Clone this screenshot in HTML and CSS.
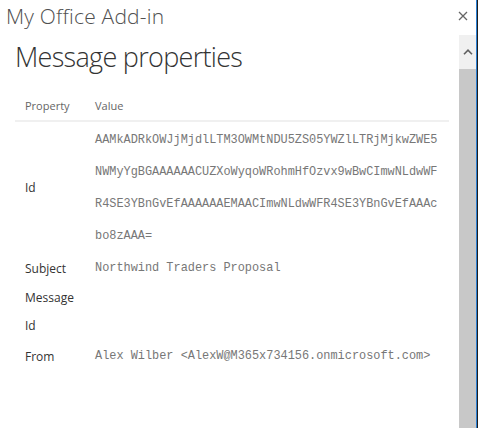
FILE: index.html
```html
<!DOCTYPE html>
<html>
<head>
<meta charset="utf-8">
<link rel="stylesheet" href="styles.css">
</head>
<body>
<div class="window">
  <div class="titlebar">
    <span class="app-title">My Office Add-in</span>
    <svg class="close" width="10" height="10" viewBox="0 0 10 10"><path d="M1 1L9 9M9 1L1 9" stroke="#666" stroke-width="1.3" fill="none"/></svg>
  </div>
  <div class="pane">
    <div class="content">
      <h1 class="heading">Message properties</h1>
      <table class="props">
        <thead>
          <tr><th class="col-prop">Property</th><th class="col-val">Value</th></tr>
        </thead>
        <tbody>
          <tr class="row-id"><td class="prop">Id</td><td class="val">AAMkADRkOWJjMjdlLTM3OWMtNDU5ZS05YWZlLTRjMjkwZWE5NWMyYgBGAAAAAACUZXoWyqoWRohmHfOzvx9wBwCImwNLdwWFR4SE3YBnGvEfAAAAAAEMAACImwNLdwWFR4SE3YBnGvEfAAAcbo8zAAA=</td></tr>
          <tr><td class="prop">Subject</td><td class="val">Northwind Traders Proposal</td></tr>
          <tr class="row-msgid"><td class="prop">Message Id</td><td class="val"></td></tr>
          <tr><td class="prop">From</td><td class="val">Alex Wilber &lt;AlexW@M365x734156.onmicrosoft.com&gt;</td></tr>
        </tbody>
      </table>
    </div>
    <div class="scrollbar">
      <div class="sb-up"><svg width="10" height="6" viewBox="0 0 10 6"><path d="M1 5.2L5 1.2L9 5.2" stroke="#606060" stroke-width="1.6" fill="none"/></svg></div>
      <div class="sb-thumb"></div>
    </div>
  </div>
</div>
</body>
</html>
```
FILE: styles.css
```css
html, body {
  margin: 0;
  padding: 0;
  background: #fff;
}
.window {
  width: 476px;
  height: 428px;
  border-right: 1px solid #2b7fd3;
  box-shadow: 1px 0 0 #1e1e1e;
  display: flex;
  flex-direction: column;
  overflow: hidden;
  font-family: "Open Sans", "Noto Sans", sans-serif;
}
.titlebar {
  height: 35px;
  flex: none;
  display: flex;
  align-items: center;
  justify-content: space-between;
  padding: 0 8px 0 6px;
}
.app-title {
  font-size: 21px;
  font-weight: 300;
  letter-spacing: 0.2px;
  color: #505050;
  line-height: 35px;
  margin-top: -2px;
}
.close {
  margin-top: -3px;
}
.pane {
  flex: 1;
  display: flex;
  min-height: 0;
}
.content {
  flex: 1;
  padding: 4px 0 0 15px;
  overflow: hidden;
}
.heading {
  margin: 0;
  font-size: 27px;
  font-weight: 300;
  letter-spacing: -0.7px;
  line-height: 36px;
  color: #333;
}
.props {
  margin-top: 17px;
  width: 434px;
  border-collapse: collapse;
  table-layout: fixed;
}
.props th {
  font-weight: 400;
  font-size: 11px;
  color: #666;
  text-align: left;
  line-height: 28px;
  padding: 0 0 0 10px;
  border-bottom: 2px solid #f0f0f0;
}
.col-prop { width: 60px; }
.col-val { width: auto; }
.props td {
  padding: 0 8px 0 10px;
  vertical-align: middle;
}
.prop {
  font-size: 12px;
  color: #333;
  line-height: 29px;
}
.val {
  font-family: "Liberation Mono", "Courier New", monospace;
  font-size: 11.9px;
  color: #777;
  line-height: 32px;
  word-break: break-all;
}
.row-id td.val {
  padding-top: 2px;
}
.row-msgid td.prop {
  line-height: 28px;
}
.scrollbar {
  width: 17px;
  flex: none;
  display: flex;
  flex-direction: column;
  background: #f0f0f0;
}
.sb-up {
  height: 34px;
  display: flex;
  align-items: center;
  justify-content: center;
}
.sb-thumb {
  flex: 1;
  background: #c8c8c8;
}
```
